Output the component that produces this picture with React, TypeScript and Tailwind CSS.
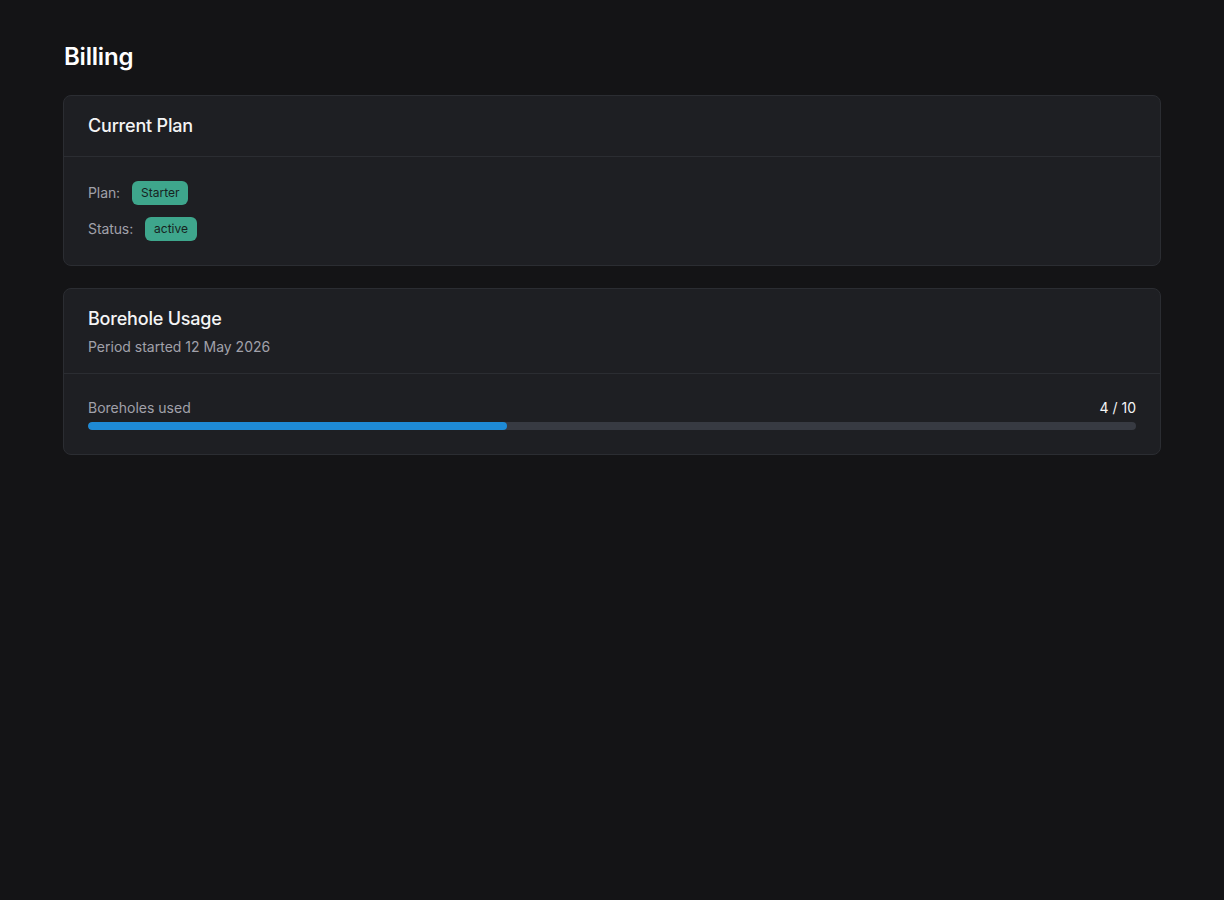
export default function App() {
  return (
    <div className="min-h-screen bg-[#141416] px-[63px] pt-[42px] text-white" style={{ fontFamily: 'Inter, "Noto Sans", sans-serif' }}>
      <h1 className="mb-[23px] pl-px text-2xl font-semibold leading-[30px] tracking-[-0.2px] text-white">Billing</h1>
      <div className="flex flex-col gap-[22px]">
        <div className="rounded-lg border border-[#2b2d32] bg-[#1e1f23]">
          <div className="border-b border-[#2b2d32] px-6 py-4">
            <h2 className="text-lg font-medium leading-7 tracking-[-0.2px] text-[#f4f4f5]">Current Plan</h2>
          </div>
          <div className="flex flex-col gap-3 p-6">
            <div className="flex h-6 items-center gap-3">
              <span className="text-sm tracking-[-0.1px] text-[#a1a1aa]">Plan:</span>
              <span className="flex h-6 items-center rounded-md bg-[#3ea68c] px-[9px] text-xs text-[#17231f]">Starter</span>
            </div>
            <div className="flex h-6 items-center gap-3">
              <span className="text-sm tracking-[-0.1px] text-[#a1a1aa]">Status:</span>
              <span className="flex h-6 items-center rounded-md bg-[#3ea68c] px-[9px] text-xs text-[#17231f]">active</span>
            </div>
          </div>
        </div>
        <div className="rounded-lg border border-[#2b2d32] bg-[#1e1f23]">
          <div className="border-b border-[#2b2d32] px-6 py-4">
            <h2 className="text-lg font-medium leading-7 tracking-[-0.2px] text-[#f4f4f5]">Borehole Usage</h2>
            <p className="mt-1 text-sm text-[#a1a1aa]">Period started 12 May 2026</p>
          </div>
          <div className="p-6">
            <div className="mb-1 flex items-center justify-between text-sm">
              <span className="text-[#a1a1aa]">Boreholes used</span>
              <span className="text-[#f4f4f5]">4 / 10</span>
            </div>
            <div className="h-2 w-full overflow-hidden rounded-full bg-[#373a42]">
              <div className="h-full rounded-full bg-[#1e8ad6]" style={{ width: '40%' }} />
            </div>
          </div>
        </div>
      </div>
    </div>
  );
}
